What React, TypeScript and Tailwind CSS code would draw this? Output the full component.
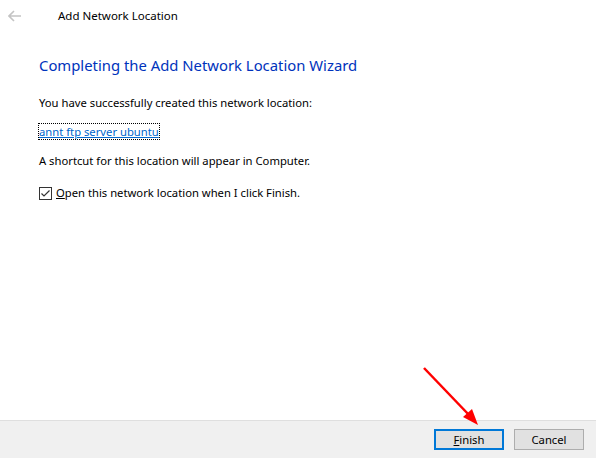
const font = { fontFamily: '"Segoe UI", "Noto Sans", sans-serif' };

const Wizard = () => {
  return (
    <div
      className="w-[596px] h-[458px] bg-white flex flex-col text-[11.25px] text-black relative overflow-hidden"
      style={font}
    >
      {/* title bar */}
      <div className="h-[32px] flex items-center">
        <svg width="14" height="12" viewBox="0 0 14 12" className="ml-[8px]">
          <path d="M6 1 L1 6 L6 11 M1 6 H13" stroke="#c4c4c4" strokeWidth="1.6" fill="none" />
        </svg>
        <span className="ml-[36px] text-[11.5px]">Add Network Location</span>
      </div>

      {/* content */}
      <div className="flex-1 pl-[39px] pt-[22px]">
        <h1 className="text-[14.85px] leading-[22px] text-[#0033bc]">
          Completing the Add Network Location Wizard
        </h1>
        <p className="mt-[19px] leading-[16px]">You have successfully created this network location:</p>
        <div className="mt-[13px] leading-[16px]">
          <span className="text-[#0066cc] underline outline outline-1 outline-dotted outline-black">
            annt ftp server ubuntu
          </span>
        </div>
        <p className="mt-[13px] leading-[16px]">A shortcut for this location will appear in Computer.</p>
        <label className="mt-[16px] flex items-center gap-[4px] leading-[16px]">
          <span className="w-[13px] h-[13px] border border-[#333] bg-white flex items-center justify-center">
            <svg width="11" height="11" viewBox="0 0 11 11">
              <path d="M1.5 5.5 L4 8 L9.5 2.5" stroke="#333" strokeWidth="1.2" fill="none" />
            </svg>
          </span>
          <span>
            <span className="underline">O</span>pen this network location when I click Finish.
          </span>
        </label>
      </div>

      {/* footer */}
      <div className="h-[38px] bg-[#f0f0f0] border-t border-[#dfdfdf] flex items-center justify-end gap-[10px] pr-[12px]">
        <button className="w-[70px] h-[21px] bg-[#e1e1e1] border-2 border-[#0078d7] leading-none">
          <span className="underline">F</span>inish
        </button>
        <button className="w-[70px] h-[21px] bg-[#e1e1e1] border border-[#adadad] leading-none">
          Cancel
        </button>
      </div>

      {/* red annotation arrow */}
      <svg className="absolute left-0 top-0 pointer-events-none" width="596" height="458">
        <line x1="424" y1="368" x2="470" y2="416" stroke="#ff0000" strokeWidth="2.5" />
        <polygon points="478,425 463,417 472,409" fill="#ff0000" />
      </svg>
    </div>
  );
};

export default function App() {
  return <Wizard />;
}
